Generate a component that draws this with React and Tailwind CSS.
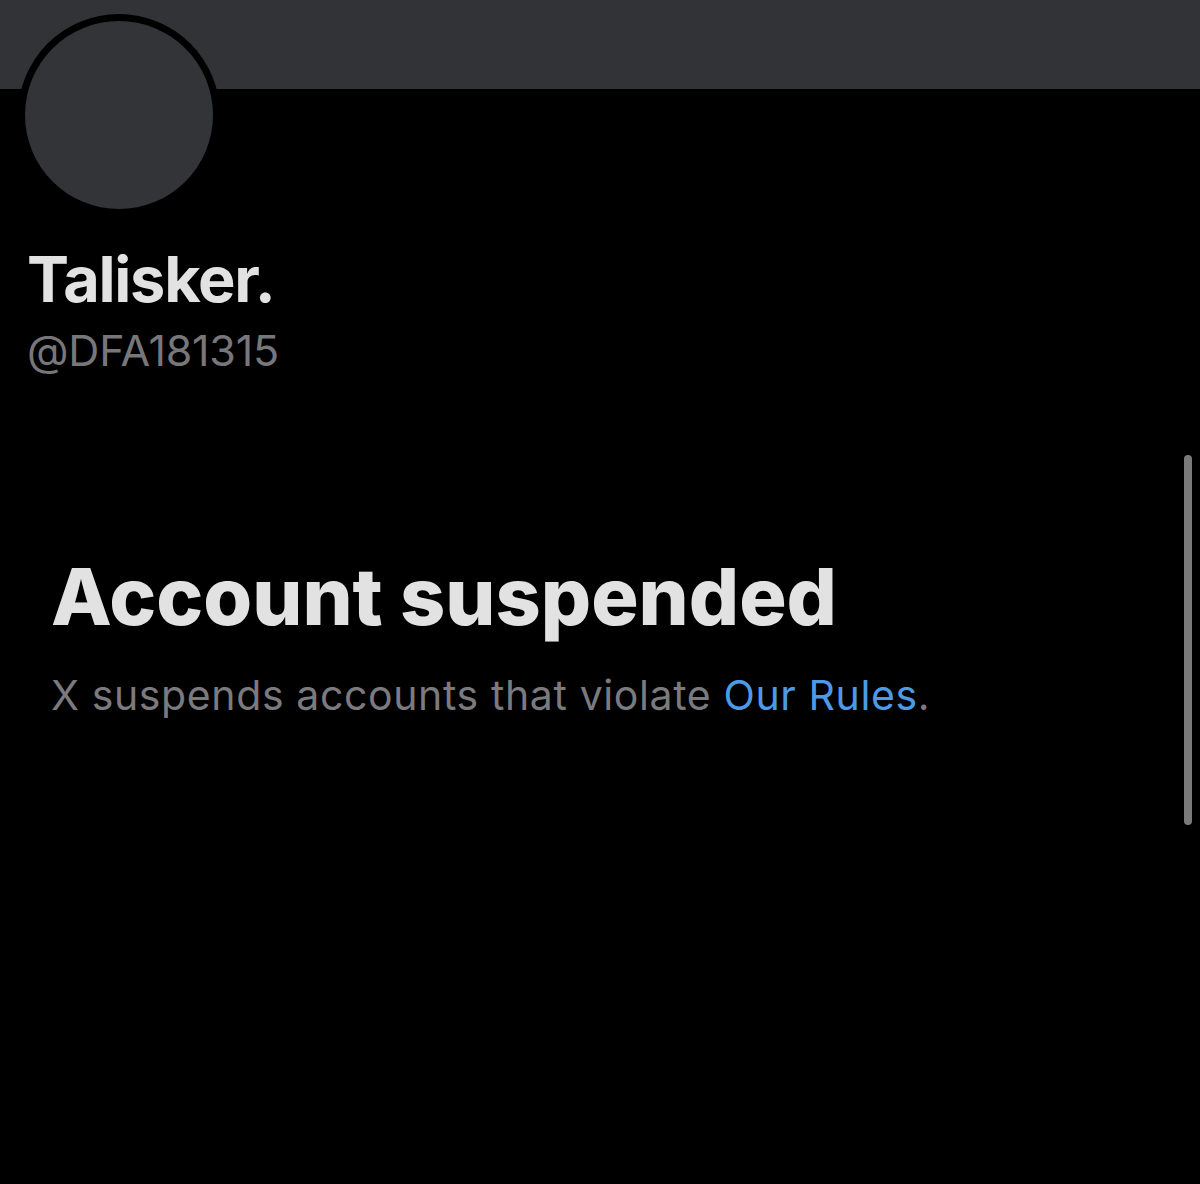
export default function App() {
  return (
    <div className="relative w-[1200px] h-[1184px] bg-black overflow-hidden font-['Inter','Liberation_Sans',sans-serif]">
      {/* banner */}
      <div className="h-[89px] bg-[#323337]" />

      {/* avatar */}
      <div className="-mt-[75px] ml-[18px] w-[202px] h-[202px] rounded-full bg-black p-[7px]">
        <div className="w-full h-full rounded-full bg-[#333438]" />
      </div>

      {/* name */}
      <div className="pl-[27px] mt-[27px]">
        <h1 className="text-[63px] leading-[72px] font-bold tracking-[-0.02em] text-[#e2e2e2]">Talisker.</h1>
        <p className="mt-[11px] text-[43px] leading-[48px] text-[#77777b] tracking-[-0.005em]">@DFA181315</p>
      </div>

      {/* suspended notice */}
      <div className="pl-[51px] mt-[178px]">
        <h2 className="text-[79px] leading-[88px] font-extrabold text-[#e2e2e2]">Account suspended</h2>
        <p className="mt-[32px] text-[41px] leading-[46px] tracking-[0.015em] text-[#7a7a7f]">
          X suspends accounts that violate <span className="text-[#4d9be6]">Our Rules</span>.
        </p>
      </div>

      {/* scroll indicator */}
      <div className="absolute right-[8px] top-[455px] w-[8px] h-[370px] rounded-full bg-[#7a7a7a]" />
    </div>
  )
}
